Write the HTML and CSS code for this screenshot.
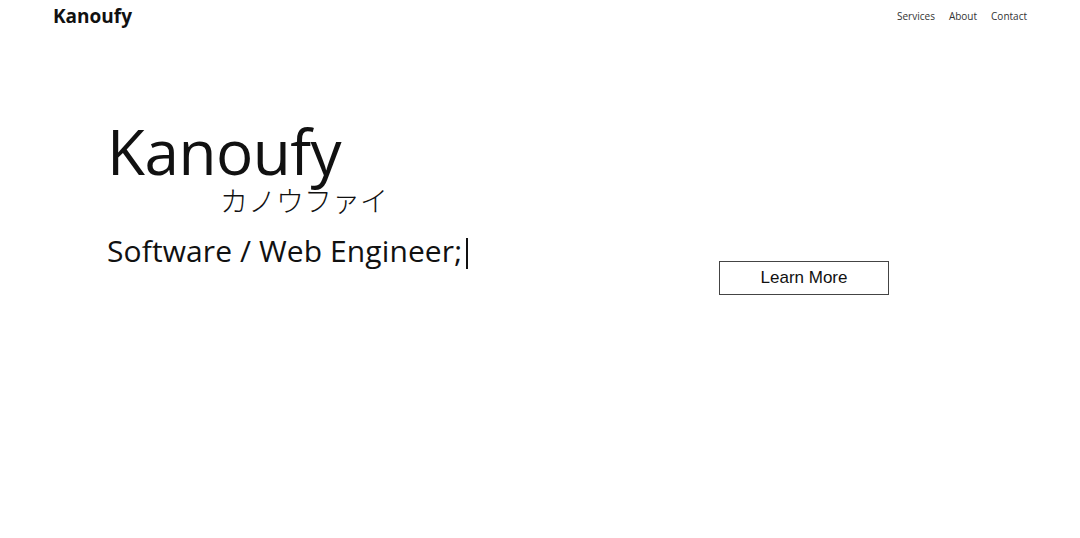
FILE: index.html
```html
<!DOCTYPE html>
<html lang="en">
<head>
<meta charset="utf-8">
<title>Kanoufy</title>
<link rel="stylesheet" href="styles.css">
</head>
<body>
<header class="topbar">
  <a class="logo" href="#">Kanoufy</a>
  <nav class="nav">
    <a href="#">Services</a>
    <a href="#">About</a>
    <a href="#">Contact</a>
  </nav>
</header>
<main class="hero">
  <div class="hero-text">
    <h1 class="title">Kanoufy</h1>
    <p class="kana">カノウファイ</p>
    <p class="role">Software / Web Engineer;<span class="caret"></span></p>
  </div>
  <div class="hero-action">
    <button class="learn">Learn More</button>
  </div>
</main>
</body>
</html>
```
FILE: styles.css
```css
* { box-sizing: border-box; }
html, body { margin: 0; padding: 0; background: #fff; }
body {
  font-family: "Open Sans", "Noto Sans CJK JP", sans-serif;
  color: #111;
  width: 1080px;
  height: 538px;
  overflow: hidden;
}
.topbar {
  display: flex;
  justify-content: space-between;
  align-items: center;
  height: 32px;
  padding: 0 53px 0 53px;
}
.logo {
  font-weight: 700;
  font-size: 19px;
  color: #111;
  text-decoration: none;
}
.nav { display: flex; gap: 14px; }
.nav a {
  font-size: 10px;
  color: #333;
  text-decoration: none;
}
.hero {
  display: flex;
  padding: 87px 0 0 107px;
}
.hero-text { width: 612px; }
.title {
  margin: 0;
  font-weight: 400;
  font-size: 62px;
  letter-spacing: -0.5px;
  line-height: 64px;
}
.kana {
  margin: 0 0 0 113px;
  font-family: "Noto Sans CJK JP", sans-serif;
  font-weight: 300;
  font-size: 28px;
  line-height: 34px;
}
.role {
  margin: 14px 0 0 0;
  font-size: 30px;
  line-height: 40px;
  letter-spacing: 0.1px;
}
.caret {
  display: inline-block;
  width: 0;
  height: 31px;
  margin-left: 4px;
  border-left: 2px solid #111;
  vertical-align: -7px;
}
.hero-action { padding-top: 142px; }
.learn {
  width: 170px;
  height: 34px;
  background: #fff;
  border: 1px solid #444;
  font-family: "Liberation Sans", Arial, sans-serif;
  font-size: 17px;
  color: #111;
}
```
